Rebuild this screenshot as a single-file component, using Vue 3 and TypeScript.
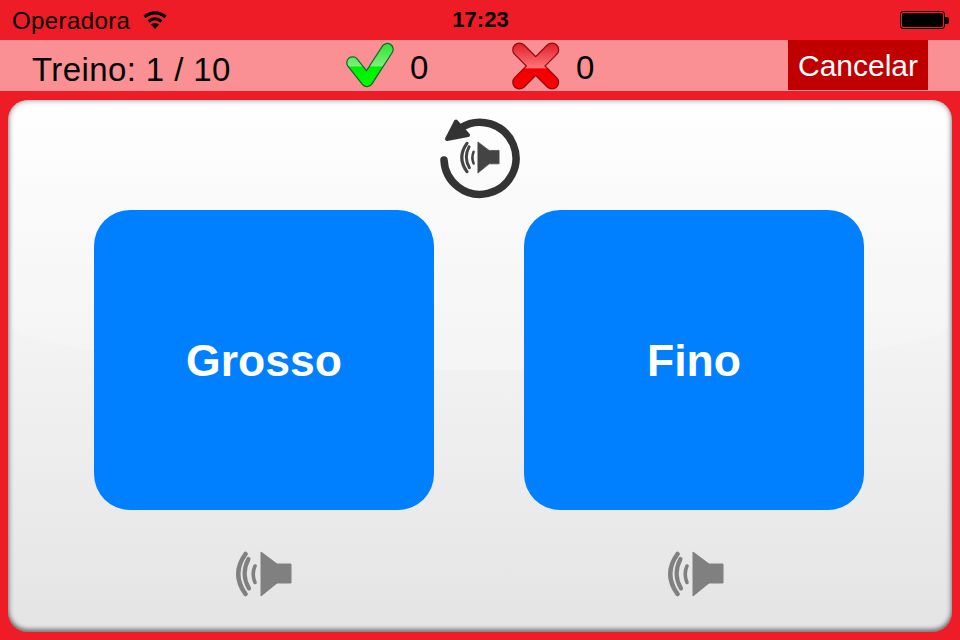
<script setup lang="ts">
const options = ['Grosso', 'Fino']
</script>

<template>
  <div class="screen">
    <svg width="0" height="0" class="defs">
      <defs>
        <symbol id="speaker" viewBox="0 0 58 46">
          <path d="M26 1 L42 13 L56 13 L56 32 L42 32 L26 45 Z" fill="currentColor" stroke="currentColor" stroke-width="1" stroke-linejoin="round" />
          <g fill="none" stroke="currentColor" stroke-linecap="round">
            <path d="M10.500 3 Q-4 23 10.500 43" stroke-width="4.500" />
            <path d="M13.500 8 Q5.500 23 14 37.500" stroke-width="4.200" />
            <path d="M20 15 Q16.400 23 20 31.500" stroke-width="3.600" />
          </g>
        </symbol>
        <linearGradient id="greenFill" gradientUnits="userSpaceOnUse" x1="0" y1="2" x2="0" y2="48">
          <stop offset="0" stop-color="#2fe02f" />
          <stop offset="0.5" stop-color="#7cf07c" />
          <stop offset="0.52" stop-color="#00ee00" />
          <stop offset="1" stop-color="#00ff00" />
        </linearGradient>
        <linearGradient id="redFill" gradientUnits="userSpaceOnUse" x1="0" y1="3" x2="0" y2="50">
          <stop offset="0" stop-color="#e01f28" />
          <stop offset="0.53" stop-color="#ff7478" />
          <stop offset="0.55" stop-color="#f00000" />
          <stop offset="1" stop-color="#ff0000" />
        </linearGradient>
      </defs>
    </svg>

    <!-- status bar -->
    <div class="status">
      <div class="status-left">
        <span class="carrier">Operadora</span>
        <svg class="wifi" width="24" height="18" viewBox="0 0 24 18">
          <g fill="none" stroke="#000" stroke-width="3.200">
            <path d="M1.500 6 C7.500 0.500 16.500 0.500 22.500 6" />
            <path d="M5.500 10.500 C9.500 7 14.500 7 18.500 10.500" />
          </g>
          <path d="M8 13.500 C10.500 11.500 13.500 11.500 16 13.500 L12 18 Z" fill="#000" />
        </svg>
      </div>
      <span class="time">17:23</span>
      <div class="status-right">
        <div class="battery"><div class="battery-fill"></div></div>
        <div class="battery-tip"></div>
      </div>
    </div>

    <!-- score bar -->
    <div class="score">
      <span class="round">Treino: 1 / 10</span>
      <div class="tally tally-ok">
        <svg width="48" height="48" viewBox="0 0 48 48">
          <path d="M6.700 21.700 L21 39.700 L41.300 8.300" fill="none" stroke="#0a6b2c" stroke-width="13" stroke-linecap="round" stroke-linejoin="round" />
          <path d="M6.700 21.700 L21 39.700 L41.300 8.300" fill="none" stroke="url(#greenFill)" stroke-width="10.500" stroke-linecap="round" stroke-linejoin="round" />
        </svg>
        <span>0</span>
      </div>
      <div class="tally tally-bad">
        <svg width="50" height="50" viewBox="0 0 50 50">
          <path d="M8.400 9.700 L41 42.300 M41 9.700 L8.400 42.300" fill="none" stroke="#8f0a0e" stroke-width="14.500" stroke-linecap="round" />
          <path d="M8.400 9.700 L41 42.300 M41 9.700 L8.400 42.300" fill="none" stroke="url(#redFill)" stroke-width="12" stroke-linecap="round" />
        </svg>
        <span>0</span>
      </div>
      <button class="cancel">Cancelar</button>
    </div>

    <!-- card -->
    <div class="card">
      <div class="gloss"></div>
      <svg class="replay" width="84" height="84" viewBox="0 0 84 84">
        <path d="M6 44 A36 36 0 1 0 22.500 12" fill="none" stroke="#333" stroke-width="7.500" stroke-linecap="round" />
        <path d="M18 5.500 L9 23 L30 19 Z" fill="#333" stroke="#333" stroke-width="4" stroke-linejoin="round" />
        <svg x="21.500" y="25" width="41" height="33" color="#444"><use href="#speaker" /></svg>
      </svg>
      <div class="options">
        <div v-for="opt in options" :key="opt" class="option">
          <button class="answer">{{ opt }}</button>
          <svg class="speaker" width="58" height="46"><use href="#speaker" /></svg>
        </div>
      </div>
    </div>
  </div>
</template>

<style scoped>
.screen {
  width: 960px;
  height: 640px;
  background: #ee1c27;
  font-family: "Liberation Sans", Arial, sans-serif;
  color: #000;
  overflow: hidden;
  display: flex;
  flex-direction: column;
}

.defs {
  position: absolute;
}

.status {
  height: 40px;
  padding: 0 11px 0 12px;
  display: grid;
  grid-template-columns: 1fr auto 1fr;
  align-items: center;
  font-size: 22px;
}

.status-left {
  display: flex;
  align-items: center;
  gap: 13px;
}

.carrier {
  font-size: 24px;
  letter-spacing: 0.4px;
  margin-top: 1px;
}

.time {
  font-weight: 700;
  font-size: 22px;
}

.status-right {
  display: flex;
  align-items: center;
  justify-content: flex-end;
}

.battery {
  width: 45px;
  height: 18px;
  border: 1px solid #000;
  border-radius: 3px;
  padding: 1px;
  box-sizing: border-box;
}

.battery-fill {
  height: 100%;
  background: #000;
  border-radius: 2px;
}

.battery-tip {
  width: 4px;
  height: 7px;
  background: #000;
  border-radius: 0 2px 2px 0;
}

.score {
  height: 51px;
  background: #fb9094;
  display: flex;
  align-items: flex-start;
  padding-left: 32px;
  font-size: 33px;
  box-sizing: border-box;
}

.round {
  width: 314px;
  line-height: 60px;
  letter-spacing: 0.4px;
}

.tally {
  display: flex;
  align-items: center;
  height: 50px;
}

.tally span {
  line-height: 54px;
  padding-top: 5px;
}

.tally-ok {
  width: 165px;
  gap: 16px;
}

.tally-bad {
  width: 277px;
  gap: 15px;
}

.cancel {
  width: 140px;
  height: 50px;
  background: #c00000;
  color: #fff;
  border: none;
  padding: 2px 0 0;
  font: inherit;
  font-size: 30px;
}

.card {
  position: relative;
  margin: 9px 8px 8px;
  height: 532px;
  border-radius: 20px;
  background: linear-gradient(#ffffff 0%, #f1f1f1 52%, #e4e4e4 100%);
  box-shadow: inset 0 0 6px rgba(0, 0, 0, 0.4), inset 0 -3px 4px rgba(0, 0, 0, 0.35);
  display: flex;
  flex-direction: column;
  align-items: center;
}

.gloss {
  position: absolute;
  left: 4px;
  right: 4px;
  top: 4px;
  height: 266px;
  border-radius: 16px 16px 50% 50% / 16px 16px 45px 45px;
  background: linear-gradient(rgba(255, 255, 255, 0), rgba(255, 255, 255, 0.22));
}

.replay {
  position: relative;
  margin-top: 16px;
}

.options {
  position: relative;
  display: flex;
  gap: 90px;
  margin-top: 10px;
  margin-left: -2px;
}

.option {
  display: flex;
  flex-direction: column;
  align-items: center;
  gap: 41px;
  color: #808080;
}

.option:last-child .speaker {
  margin-left: 4px;
}

.answer {
  width: 340px;
  height: 300px;
  border: none;
  border-radius: 36px;
  background: #007fff;
  color: #fff;
  padding: 2px 0 0;
  font: inherit;
  font-size: 44.5px;
  font-weight: 700;
}
</style>
